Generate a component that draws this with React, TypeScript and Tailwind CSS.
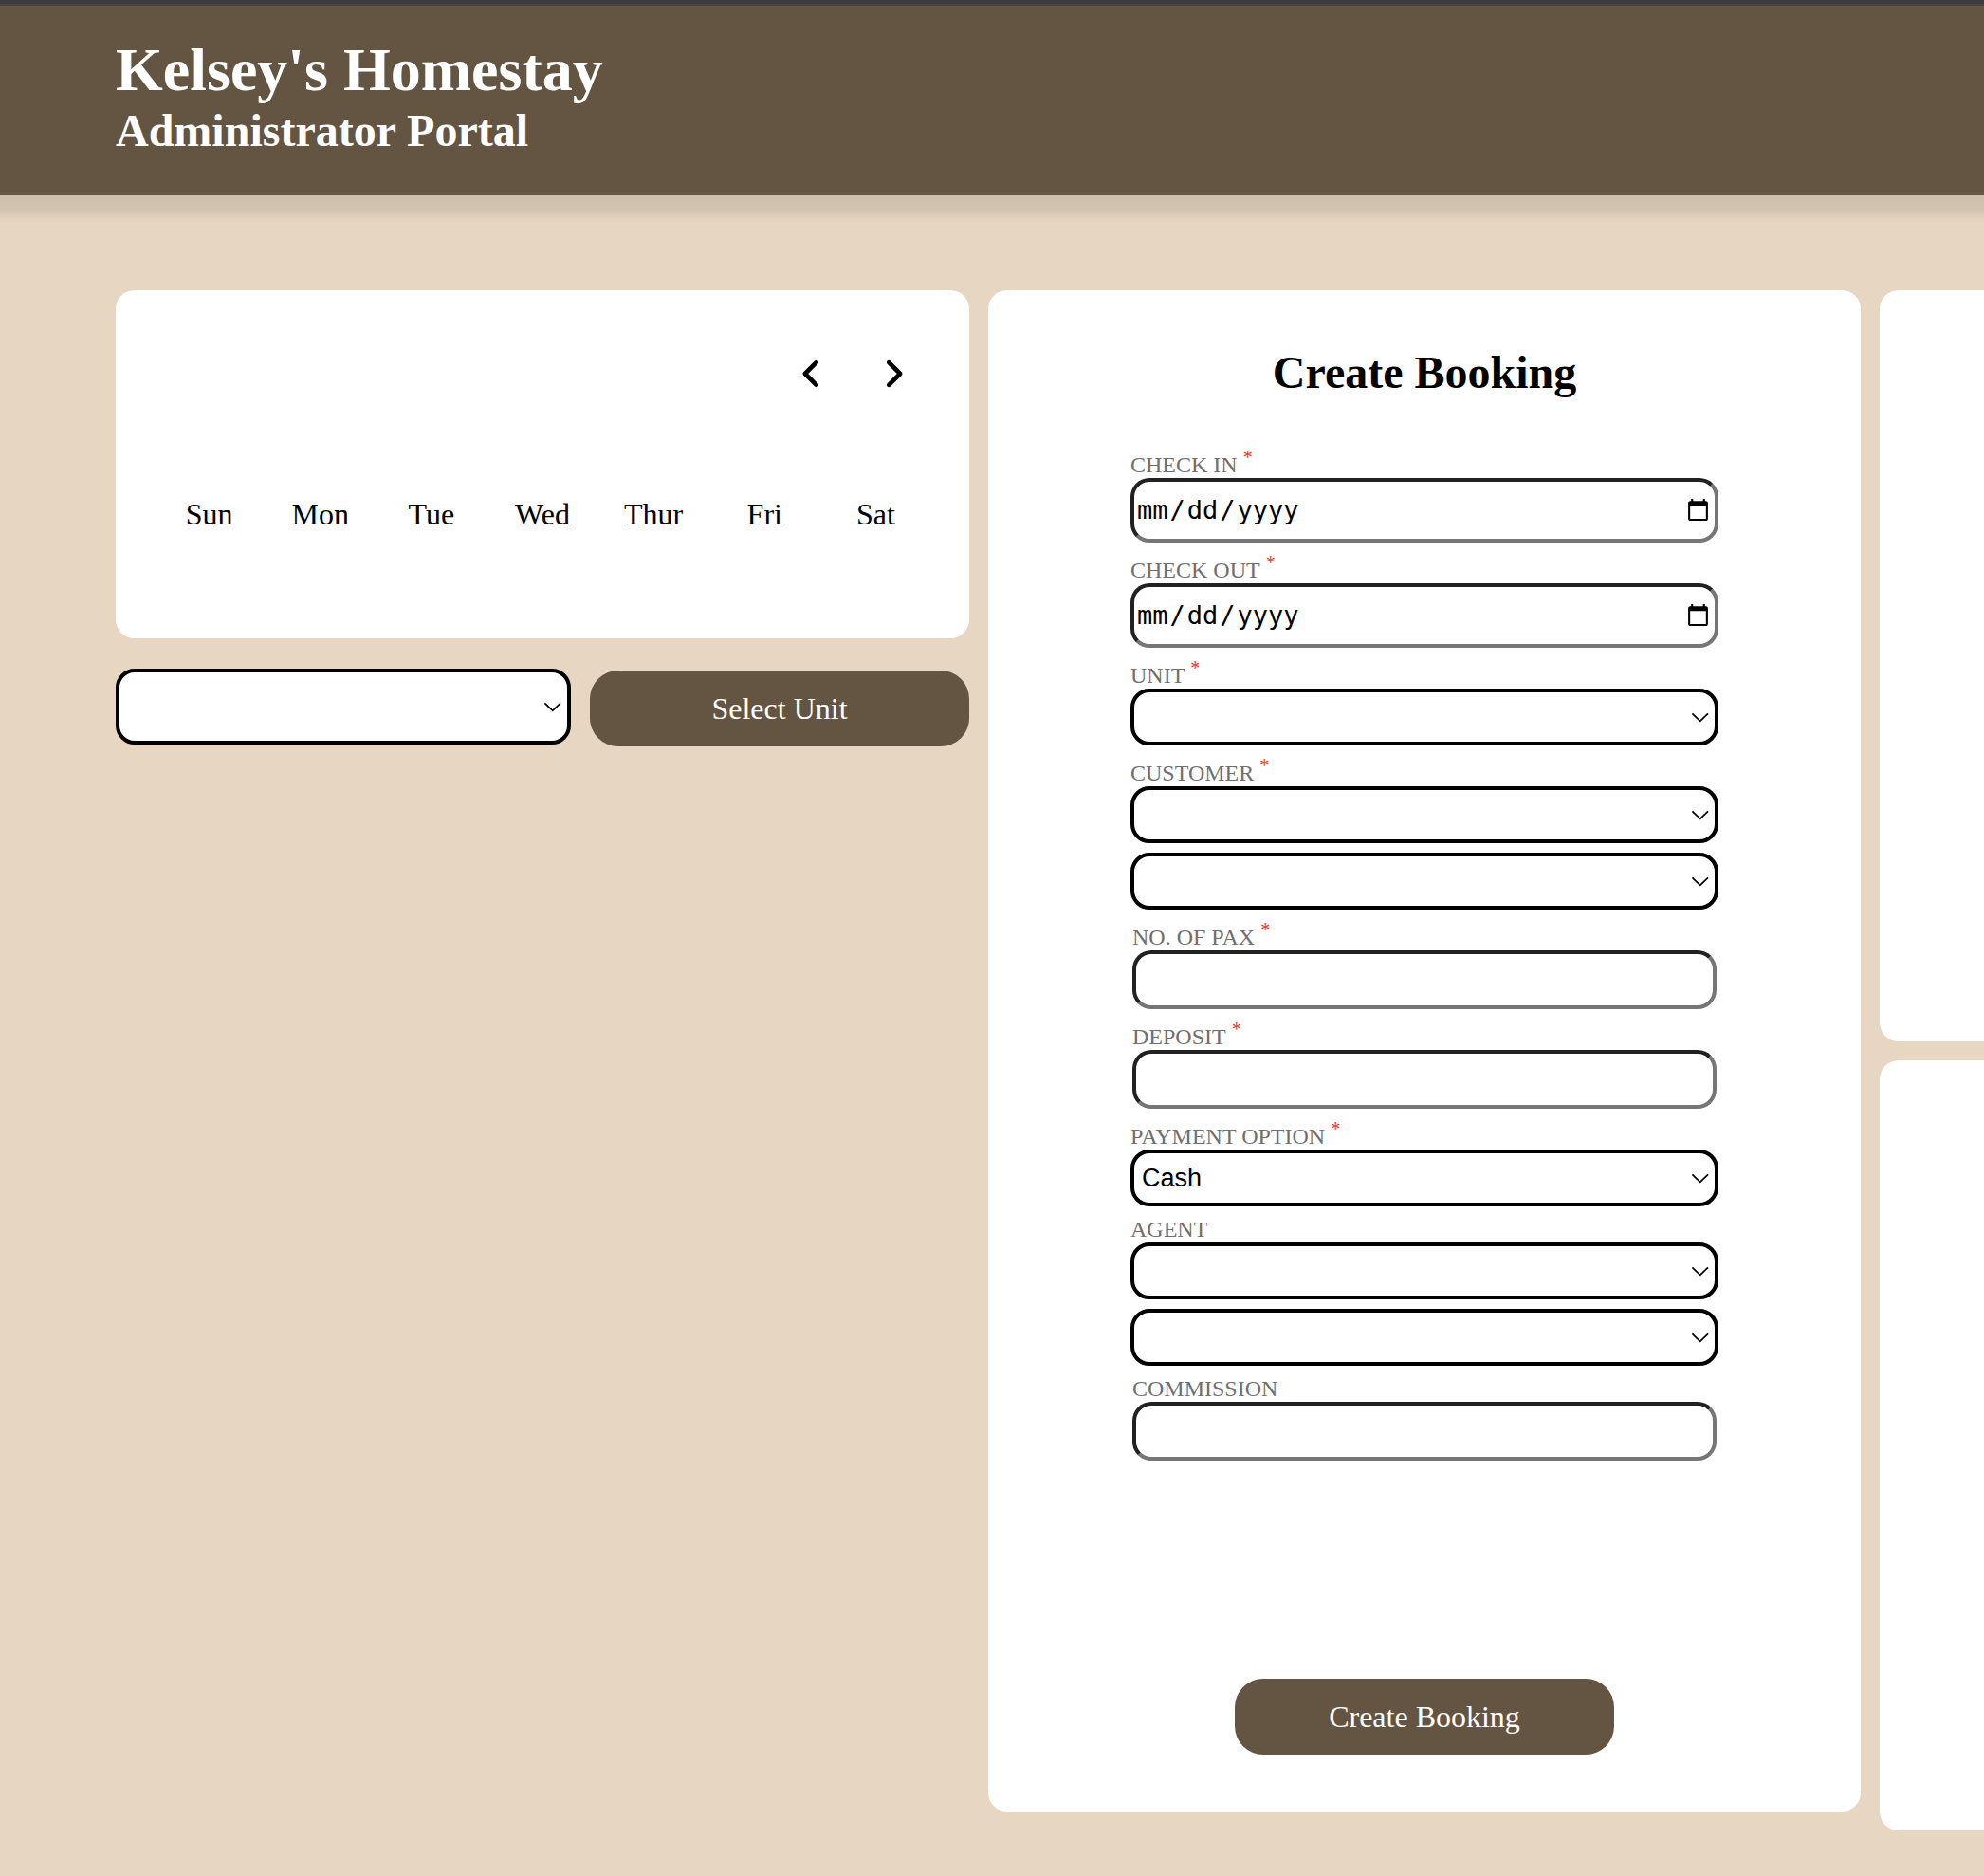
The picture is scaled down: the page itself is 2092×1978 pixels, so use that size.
import { useId, type ReactNode } from "react";
import { FaAngleLeft, FaAngleRight } from "react-icons/fa6";

const weekdays = ["Sun", "Mon", "Tue", "Wed", "Thur", "Fri", "Sat"];

const insetBorder =
  "block w-full rounded-[20px] border-4 border-t-[#212121] border-l-[#212121] border-r-[#767676] border-b-[#767676] bg-white text-black outline-none";

function Select({ id, label, options = [], size = "h-[60px]" }: { id?: string; label?: string; options?: string[]; size?: string }) {
  return (
    <div className="relative w-full">
      <select
        id={id}
        aria-label={label}
        className={`block w-full appearance-none rounded-[20px] border-4 border-black bg-white px-2 font-['Liberation_Sans',sans-serif] text-[27px] text-black ${size}`}
      >
        {options.map((option) => (
          <option key={option}>{option}</option>
        ))}
      </select>
      <svg
        className="pointer-events-none absolute inset-y-0 right-[10px] my-auto h-[11px] w-[19px]"
        viewBox="0 0 19 11"
        fill="none"
        stroke="black"
        strokeWidth="1.7"
        aria-hidden="true"
      >
        <path d="M1.4 1.4 9.7 9.4 18 1.4" />
      </svg>
    </div>
  );
}

function Field({ label, required = false, children }: { label: string; required?: boolean; children: (id: string) => ReactNode }) {
  const id = useId();
  return (
    <div>
      <label htmlFor={id} className={`flex items-end text-2xl leading-7 text-[#6f6f6f] ${required ? "h-[33px]" : "h-7"}`}>
        {label}
        {required && <span className="ml-1.5 self-start text-xl leading-[22px] text-[#ea3323]">*</span>}
      </label>
      {children(id)}
    </div>
  );
}

function DateField({ label }: { label: string }) {
  return (
    <Field label={label} required>
      {(id) => (
        <input
          id={id}
          type="date"
          className={`${insetBorder} h-[68px] pr-0.5 pl-0.5 font-['DejaVu_Sans_Mono',monospace] text-[27px] [&::-webkit-datetime-edit-text]:px-px`}
        />
      )}
    </Field>
  );
}

function NumberField({ label, required }: { label: string; required?: boolean }) {
  return (
    <div className="px-0.5">
      <Field label={label} required={required}>
        {(id) => <input id={id} type="text" inputMode="decimal" className={`${insetBorder} h-[62px] px-2 text-[27px]`} />}
      </Field>
    </div>
  );
}

function Calendar() {
  return (
    <section className="rounded-[20px] bg-white px-10 pt-10 pb-[113px]">
      <div className="flex h-24 items-center justify-end gap-1.5">
        <button type="button" aria-label="Previous month" className="flex h-20 w-20 items-center justify-center">
          <FaAngleLeft className="size-[38px]" />
        </button>
        <button type="button" aria-label="Next month" className="flex h-20 w-20 items-center justify-center">
          <FaAngleRight className="size-[38px]" />
        </button>
      </div>
      <ul className="mt-[82px] grid grid-cols-7 text-center text-[32px] leading-9">
        {weekdays.map((day) => (
          <li key={day}>{day}</li>
        ))}
      </ul>
    </section>
  );
}

const primaryButton = "h-20 w-[400px] rounded-[30px] bg-[#635541] text-[32px] leading-9 text-white";

function BookingForm() {
  return (
    <form className="mb-5 flex flex-col items-center self-start rounded-[20px] bg-white py-15 text-black">
      <h3 className="text-5xl leading-[54px] font-bold">Create Booking</h3>
      <div className="mt-[51px] flex w-[620px] max-w-full flex-col gap-2.5">
        <DateField label="CHECK IN" />
        <DateField label="CHECK OUT" />
        <Field label="UNIT" required>
          {(id) => <Select id={id} />}
        </Field>
        <Field label="CUSTOMER" required>
          {(id) => <Select id={id} />}
        </Field>
        <Select label="Customer name" />
        <NumberField label="NO. OF PAX" required />
        <NumberField label="DEPOSIT" required />
        <Field label="PAYMENT OPTION" required>
          {(id) => <Select id={id} options={["Cash"]} />}
        </Field>
        <Field label="AGENT">{(id) => <Select id={id} />}</Field>
        <Select label="Agent name" />
        <NumberField label="COMMISSION" />
      </div>
      <button type="button" className={`mt-[230px] ${primaryButton}`}>
        Create Booking
      </button>
    </form>
  );
}

export default function App() {
  return (
    <div className="min-h-screen overflow-x-hidden bg-[#e7d6c1] font-['Liberation_Serif',serif] text-black">
      <div className="relative z-10 h-1.5 border-b-2 border-[#444444] bg-[#3a3a3a]" />
      <header className="h-[200px] bg-[#635541] px-[122px] pt-8 text-white shadow-[0_0_10px_20px_rgba(0,0,0,0.1)]">
        <h1 className="text-[64px] leading-[72px] font-bold">Kelsey's Homestay</h1>
        <h2 className="text-5xl leading-[56px] font-bold">Administrator Portal</h2>
      </header>
      <main className="grid grid-cols-[90fr_92fr_11fr] gap-5 pt-[100px] pb-12 pl-[122px]">
        <div>
          <Calendar />
          <div className="mt-8 flex gap-5">
            <div className="flex-1">
              <Select label="Unit" size="h-20" />
            </div>
            <button type="button" className={`mt-0.5 shrink-0 ${primaryButton}`}>
              Select Unit
            </button>
          </div>
        </div>
        <BookingForm />
        <div className="flex flex-col gap-5">
          <section className="h-[792px] rounded-l-[20px] bg-white" />
          <section className="min-h-[812px] flex-1 rounded-l-[20px] bg-white" />
        </div>
      </main>
    </div>
  );
}
